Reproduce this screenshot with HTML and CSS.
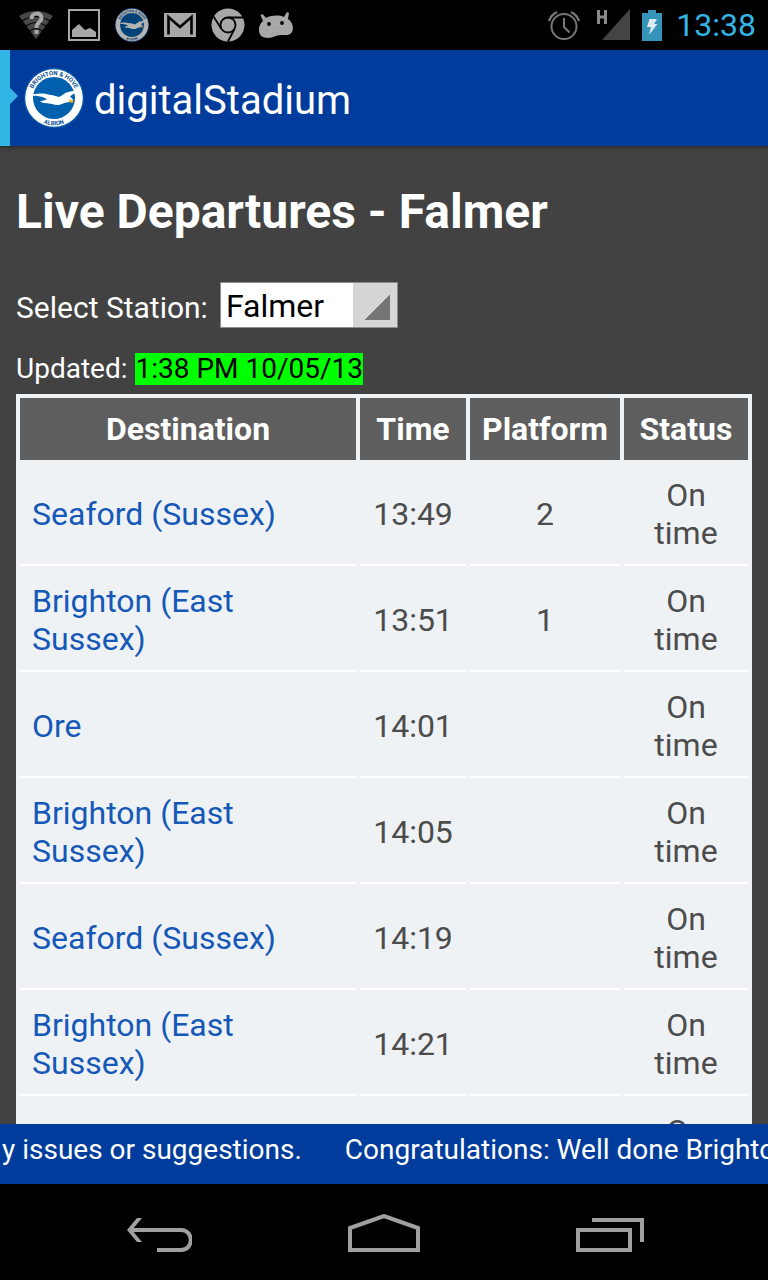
FILE: index.html
```html
<!DOCTYPE html>
<html lang="en">
<head>
<meta charset="utf-8">
<meta name="viewport" content="width=device-width, initial-scale=1">
<title>digitalStadium</title>
<link rel="stylesheet" href="styles.css">
</head>
<body>
<svg class="defs" aria-hidden="true">
  <defs>
    <symbol id="crest" viewBox="0 0 60 60">
      <circle cx="30" cy="30" r="30" fill="#0a5ca8"/>
      <circle cx="30" cy="30" r="28.800" fill="#fff"/>
      <circle cx="30" cy="30" r="21" fill="#0060ad"/>
      <path id="crest-top" fill="none" d="M7.200 30A22.800 22.800 0 0 1 52.800 30"/>
      <path id="crest-bottom" fill="none" d="M2.700 30A27.300 27.300 0 0 0 57.300 30"/>
      <text class="crest-text" text-anchor="middle"><textPath href="#crest-top" startOffset="50%">BRIGHTON &amp; HOVE</textPath></text>
      <text class="crest-text" text-anchor="middle"><textPath href="#crest-bottom" startOffset="50%">ALBION</textPath></text>
      <path fill="#fff" d="M2 28.500C8 26 14 25 19 25.500C23 25.500 25 27.500 28 27L35 29C38 28 40 25 44 24C49 22.500 53 23 57.500 21.500C54 24.500 49 25.500 46 28.500L49 31.500L48 34C44 34 41 34.500 38 36C35 37.500 31 37 28 36C24 35 19 35.500 16 33.500L23 31.500L20 29.500C14 27.500 8 27.500 2 28.500Z"/>
      <path fill="#f6b21a" d="M45.500 31.500L49.500 33L48.500 35L45 34Z"/>
    </symbol>
  </defs>
</svg>
<div class="screen">
  <div class="statusbar">
    <div class="notifications">
      <svg width="34" height="30" viewBox="1 0 34 30" role="img" aria-label="Wi-Fi">
        <path fill="#484848" d="M1 6Q18-4 35 6L18 29Z"/>
        <path fill="none" stroke="#000" stroke-width="1.200" d="M4 11Q18 2 32 11M8 16Q18 9 28 16M12 21Q18 16 24 21"/>
        <path fill="none" stroke="#a8a8a8" stroke-width="4" d="M13.500 9C13.500 2 23.500 2 23.500 8C23.500 12 18.500 12 18.500 18"/>
        <path fill="#a8a8a8" d="M16.500 20h4v4h-4z"/>
      </svg>
      <svg width="32" height="32" viewBox="0 0 32 32" role="img" aria-label="Picture">
        <path fill="none" stroke="#a8a8a8" stroke-width="2" d="M1 1H31V31H1Z"/>
        <path fill="#a8a8a8" d="M4 28V21L11 15L17 21L22 19L28 23V28Z"/>
      </svg>
      <svg class="crest-dim" width="34" height="34" role="img" aria-label="Albion"><use href="#crest"/></svg>
      <svg width="32" height="32" viewBox="0 0 32 32" role="img" aria-label="Mail">
        <path fill="#a8a8a8" d="M0 4H32V28H0Z"/>
        <path fill="none" stroke="#000" stroke-width="2.600" d="M4.500 25.500V8L16 18L27.500 8V25.500"/>
      </svg>
      <svg width="34" height="34" viewBox="0 0 34 34" role="img" aria-label="Browser">
        <circle cx="17" cy="17" r="16.500" fill="#a8a8a8"/>
        <g fill="none" stroke="#000" stroke-width="1.800"><circle cx="17" cy="17" r="7.500"/><path d="M17 9.500H32.500M10.500 21L2.500 8.500M23.500 21L17 33.500"/></g>
      </svg>
      <svg width="34" height="28" viewBox="1 0 34 28" role="img" aria-label="Android">
        <path fill="#a8a8a8" d="M1 19C1 14 3 12 5 10L2.500 4L4.500 3L8 7C14 4 21 4 26 6L29 1L31 2L30 8C35 11 36 18 34 21C32 25 27 24 23 24C18 24 15 27 10 27C4 27 1 24 1 19Z"/>
        <circle cx="11" cy="13" r="1.900"/><circle cx="24" cy="12" r="1.900"/>
        <path fill="#8c8c8c" d="M15 17h1v1h-1zM19 17h1v1h-1zM15 21h1v1h-1zM19 21h1v1h-1z"/>
      </svg>
    </div>
    <div class="indicators">
      <svg width="32" height="32" viewBox="0 0 32 32" role="img" aria-label="Alarm">
        <g fill="none" stroke="#777" stroke-width="2"><circle cx="16" cy="17.500" r="12.500"/><path d="M16 9V18L21.500 23.500"/><path stroke-width="2.400" d="M1 12Q3 6 9 3M31 12Q29 6 23 3"/></g>
      </svg>
      <svg class="signal" width="34" height="32" viewBox="0 0 34 32" role="img" aria-label="H signal">
        <path fill="#444" d="M34 0V31H6Z"/>
        <path fill="none" stroke="#8a8a8a" stroke-width="3" d="M2.500 1V15M9.500 1V15M2.500 8H9.500"/>
      </svg>
      <svg width="20" height="31" viewBox="0 0 20 31" role="img" aria-label="Charging">
        <path fill="#3594b9" d="M0 3H6V0H14V3H20V31H0Z"/>
        <path fill="#dcecf2" d="M7.500 9H15L12 14H15.500L7 25L9 17H5Z"/>
      </svg>
      <time class="clock">13:38</time>
    </div>
  </div>

  <header class="appbar">
    <span class="drawer-edge"></span>
    <svg class="logo" width="60" height="60" role="img" aria-label="Brighton &amp; Hove Albion"><use href="#crest"/></svg>
    <span class="app-name">digitalStadium</span>
  </header>

  <main class="content">
    <h1>Live Departures - Falmer</h1>
    <form class="station">
      <label for="station">Select Station:</label>
      <select id="station"><option>Falmer</option></select>
    </form>
    <p class="updated"><span>Updated:</span><mark>1:38 PM 10/05/13</mark></p>
    <table class="departures">
      <colgroup><col><col class="col-time"><col class="col-platform"><col class="col-status"></colgroup>
      <thead>
        <tr><th>Destination</th><th>Time</th><th>Platform</th><th>Status</th></tr>
      </thead>
      <tbody>
        <tr><td><a href="#">Seaford (Sussex)</a></td><td>13:49</td><td>2</td><td>On time</td></tr>
        <tr><td><a href="#">Brighton (East Sussex)</a></td><td>13:51</td><td>1</td><td>On time</td></tr>
        <tr><td><a href="#">Ore</a></td><td>14:01</td><td></td><td>On time</td></tr>
        <tr><td><a href="#">Brighton (East Sussex)</a></td><td>14:05</td><td></td><td>On time</td></tr>
        <tr><td><a href="#">Seaford (Sussex)</a></td><td>14:19</td><td></td><td>On time</td></tr>
        <tr><td><a href="#">Brighton (East Sussex)</a></td><td>14:21</td><td></td><td>On time</td></tr>
        <tr><td></td><td></td><td></td><td>On time</td></tr>
      </tbody>
    </table>
  </main>

  <div class="ticker">
    <span>y issues or suggestions.</span>
    <span>Congratulations: Well done Brighton</span>
  </div>

  <nav class="navbar">
    <button type="button" aria-label="Back">
      <svg width="72" height="40" viewBox="0 0 72 40"><path fill="none" stroke="#a0a0a0" stroke-width="4" d="M10 16H61C74 16 74 36 61 36H37"/><path fill="#a0a0a0" d="M17 4H22L12 16L22 28H17L7 16Z"/></svg>
    </button>
    <button type="button" aria-label="Home">
      <svg width="72" height="40" viewBox="0 0 72 40"><path fill="none" stroke="#a0a0a0" stroke-width="4" d="M2 36V14L36 2L70 14V36Z"/></svg>
    </button>
    <button type="button" aria-label="Recent apps">
      <svg width="72" height="40" viewBox="0 0 72 40"><path fill="none" stroke="#a0a0a0" stroke-width="4" d="M2 16H54V36H2ZM16 6H66V28"/></svg>
    </button>
  </nav>
</div>
</body>
</html>
```

FILE: styles.css
```css
* { box-sizing: border-box; }

body {
  margin: 0;
  background: #424242;
  font-family: Roboto, "Liberation Sans", sans-serif;
  color: #fff;
}

.defs { position: absolute; width: 0; height: 0; }

.screen {
  display: flex;
  flex-direction: column;
  height: 100vh;
}

.statusbar {
  flex: none;
  display: flex;
  align-items: center;
  justify-content: space-between;
  height: 50px;
  padding: 0 12px 0 19px;
  background: #000;
}

.notifications {
  display: grid;
  grid-template-columns: repeat(6, 34px);
  gap: 14px;
  align-items: center;
  justify-items: center;
}

.crest-dim { opacity: 0.7; }
.indicators { display: flex; align-items: center; gap: 12px; }
.indicators .signal { margin-left: 4px; }
.clock { margin-left: 2px; font-size: 32px; line-height: 50px; color: #33b5e5; }

.crest-text {
  font-family: Roboto, "Liberation Sans", sans-serif;
  font-size: 6px;
  font-weight: bold;
  fill: #0a4f96;
}

.appbar {
  flex: none;
  display: flex;
  align-items: center;
  height: 96px;
  background: #003c9c;
  box-shadow: 0 1px 4px rgba(0, 0, 0, 0.5);
  z-index: 1;
}

.drawer-edge {
  align-self: stretch;
  width: 18px;
  background: #33b5e5;
  clip-path: polygon(0 0, 10px 0, 10px 38px, 18px 46px, 10px 54px, 10px 100%, 0 100%);
}

.logo { margin: 0 10px 0 6px; }
.app-name { padding-top: 6px; font-size: 40px; line-height: 48px; }

.content {
  flex: 1;
  min-height: 0;
  padding: 33px 16px 0;
  overflow-y: auto;
  scrollbar-width: none;
}

h1 { margin: 0; font-size: 48px; line-height: 66px; }

.station {
  display: flex;
  align-items: center;
  gap: 12px;
  margin-top: 37px;
  font-size: 30px;
}

.station label { padding-top: 4px; }

select {
  appearance: none;
  width: 178px;
  height: 46px;
  padding: 2px 50px 0 5px;
  border: 1px solid #8c8c8c;
  border-radius: 0;
  background:
    linear-gradient(to bottom right, transparent 50%, #757575 50%) right 7px top 11px / 26px 26px no-repeat,
    linear-gradient(#d5d5d5, #d5d5d5) right / 44px 100% no-repeat,
    #fff;
  color: #000;
  font: 32px Roboto, "Liberation Sans", sans-serif;
}

.updated {
  display: flex;
  align-items: center;
  gap: 8px;
  margin: 23px 0 7px;
  font-size: 28px;
  line-height: 32px;
  padding: 2px 0;
}

mark { background: #0f0; color: #000; }

.departures {
  width: 100%;
  table-layout: fixed;
  border-collapse: separate;
  border-spacing: 4px;
  background: #eef2f5;
  color: #4c4c4c;
  font-size: 32px;
  line-height: 38px;
}

.col-time { width: 106px; }
.col-platform { width: 150px; }
.col-status { width: 124px; }

th, td { padding: 12px; text-align: center; }
th { background: #5e5e5e; color: #fff; }
td { border-bottom: 2px solid #fff; }
td:first-child { text-align: left; }
td:nth-child(2), th { padding-left: 0; padding-right: 0; }
.departures a { color: #1558b8; text-decoration: none; }

.ticker {
  flex: none;
  display: flex;
  gap: 43px;
  height: 60px;
  padding: 8px 0 0 2px;
  overflow: hidden;
  background: #003c9c;
  font-size: 28px;
  line-height: 36px;
  white-space: nowrap;
}

.navbar {
  flex: none;
  display: flex;
  align-items: center;
  justify-content: center;
  gap: 40px;
  height: 96px;
  background: #000;
}

.navbar button {
  display: flex;
  align-items: center;
  justify-content: center;
  width: 188px;
  height: 96px;
  padding: 4px 0 0;
  border: 0;
  background: none;
}
```
